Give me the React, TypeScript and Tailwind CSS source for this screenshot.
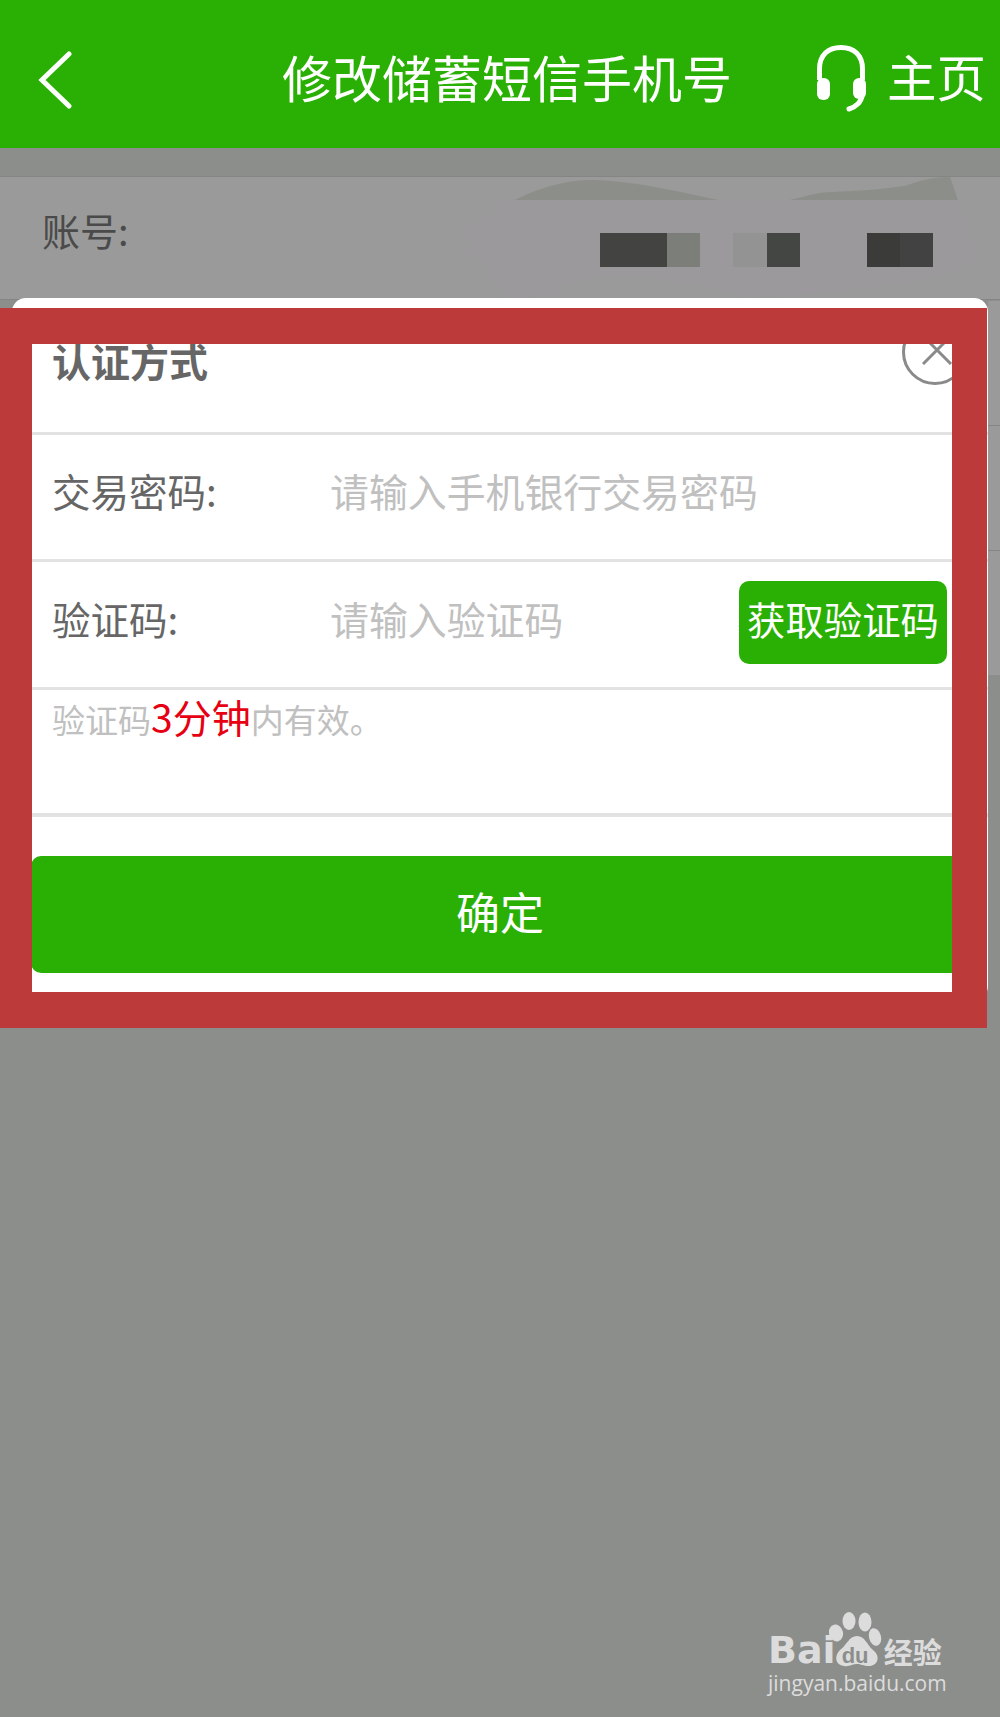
const cjk = "font-['Noto_Sans_CJK_SC','Liberation_Sans',sans-serif]";

function Headset() {
  return (
    <svg width="52" height="70" viewBox="0 0 52 70" className="mt-[10px] shrink-0" fill="none">
      <path d="M4.5 36V25C4.5 11 13 3.5 26 3.5C39 3.5 47.5 11 47.5 25V36" stroke="#fff" strokeWidth="5" />
      <rect x="2" y="34" width="13" height="22" rx="6" fill="#fff" />
      <rect x="38" y="34" width="13" height="21" rx="6" fill="#fff" />
      <path d="M47 52C46 58 41 63 34 65" stroke="#fff" strokeWidth="5" strokeLinecap="round" />
    </svg>
  );
}

function PawLogo() {
  return (
    <svg width="56" height="56" viewBox="0 0 56 56" className="shrink-0" fill="#dcdcdc">
      <ellipse cx="7" cy="21" rx="7" ry="8.5" transform="rotate(-15 7 21)" />
      <ellipse cx="20" cy="9" rx="6.5" ry="9" />
      <ellipse cx="36" cy="10" rx="6.5" ry="9.5" />
      <ellipse cx="46" cy="25" rx="6" ry="9" transform="rotate(-15 46 25)" />
      <path d="M28 24C36 24 38 33 44 38C52 44 49 54 40 54C34 54 32 52 28 52C23 52 21 55 15 54C6 53 5 44 11 38C18 33 20 24 28 24Z" />
    </svg>
  );
}

export default function App() {
  return (
    <div className={`relative h-[1717px] w-[1000px] overflow-hidden bg-[#8c8e8c] ${cjk}`}>
      <header className="relative flex h-[148px] items-center bg-[#2ab004] text-white">
        <svg width="36" height="60" viewBox="0 0 36 60" className="mt-[12px] ml-[36px]" fill="none">
          <path d="M33 4L6 30L33 56" stroke="#fff" strokeWidth="5" strokeLinecap="round" />
        </svg>
        <h1 className="absolute left-[282px] mt-[4px] text-[50px] leading-none font-normal whitespace-nowrap">修改储蓄短信手机号</h1>
        <div className="mr-[14px] ml-auto flex items-center gap-[20px]">
          <Headset />
          <span className="mt-[4px] text-[49.5px] leading-none">主页</span>
        </div>
      </header>

      <div className="h-[29px] border-b border-[#848684]" />

      <section className="relative h-[123px] border-b border-[#848684] bg-[#999a99]">
        <svg width="1000" height="123" viewBox="0 0 1000 123" className="absolute top-0 left-0">
          <path d="M515 23C545 8 570 3 594 3C640 5 680 15 718 23ZM790 23C810 18 820 15 833 15C860 14 885 12 904 9C920 4 930 0 950 0L958 23Z" fill="#8c8e89" />
          <path d="M515 23L958 23L981 83C960 93 930 100 904 106C850 115 790 120 743 120C700 110 640 95 600 100C575 105 550 115 529 121L505 121L461 53Z" fill="#9b999b" />
        </svg>
        <span className="absolute top-[28px] left-[42px] text-[38px] leading-[50px] text-[#4a4a4a]">账号:</span>
        <div className="absolute top-[56px] left-[600px] flex h-[34px]">
          <div className="w-[67px] bg-[#434442]" />
          <div className="w-[33px] bg-[#7c7e7a]" />
          <div className="ml-[33px] w-[34px] bg-[#949394]" />
          <div className="w-[33px] bg-[#444643]" />
          <div className="ml-[67px] w-[33px] bg-[#3b3c39]" />
          <div className="w-[33px] bg-[#424242]" />
        </div>
      </section>

      {/* right edge of the rows behind the dialog */}
      <div className="absolute top-[301px] left-[988px] h-[124px] w-3 bg-[#999a99]" />
      <div className="absolute top-[425px] left-[988px] h-[125px] w-3 border-t border-[#848684] bg-[#999a99]" />
      <div className="absolute top-[550px] left-[988px] h-[125px] w-3 border-t border-[#848684] bg-[#999a99]" />

      <div className="absolute top-[298px] left-[12px] flex h-[702px] w-[976px] flex-col rounded-[14px] bg-white">
        <div className="relative h-[134px] shrink-0 overflow-hidden">
          <span className="absolute top-[37px] left-[40px] text-[39px] leading-[50px] font-bold text-[#666]">认证方式</span>
          <div className="absolute top-[21px] left-[890px] h-[66px] w-[66px] rounded-full border-[3px] border-[#8a8a8a]" />
          <svg width="30" height="30" viewBox="0 0 30 30" className="absolute top-[37px] left-[910px]" fill="none">
            <path d="M1 1L29 29M29 1L1 29" stroke="#8a8a8a" strokeWidth="3" />
          </svg>
        </div>

        <div className="flex h-[127px] shrink-0 items-center border-t-[3px] border-[#e2e2e2] pb-[13px] pl-[40px]">
          <span className="w-[278px] text-[38.5px] leading-none text-[#666]">交易密码:</span>
          <span className="text-[38.9px] leading-none text-[#c0c0c0]">请输入手机银行交易密码</span>
        </div>

        <div className="relative flex h-[128px] shrink-0 items-center border-t-[3px] border-[#e2e2e2] pb-[13px] pl-[40px]">
          <span className="w-[278px] text-[38.5px] leading-none text-[#666]">验证码:</span>
          <span className="text-[38.9px] leading-none text-[#c0c0c0]">请输入验证码</span>
          <button className="absolute top-[19px] right-[41px] h-[83px] w-[208px] rounded-[10px] bg-[#2ab004] pb-[8px] text-[38.4px] whitespace-nowrap text-white">获取验证码</button>
        </div>

        <div className="h-[126px] shrink-0 border-t-[3px] border-[#e2e2e2] pt-[3px] pl-[40px] leading-[46px] text-[#c0c0c0]">
          <span className="text-[33px]">验证码</span>
          <span className="text-[39px] text-[#e60012]">3分钟</span>
          <span className="text-[33px]">内有效。</span>
        </div>

        <div className="h-[43px] shrink-0 border-t-4 border-[#e2e2e2]" />
        <button className="ml-[19px] h-[117px] w-[950px] shrink-0 rounded-[10px] bg-[#2ab004] pr-[12px] pb-[8px] text-[44px] text-white">确定</button>
      </div>

      {/* red annotation frame drawn over the screenshot */}
      <div className="absolute top-[308px] left-0 h-[720px] w-[987px] border-t-[36px] border-r-[35px] border-b-[36px] border-l-[32px] border-[#bd3a3a]" />

      <div className="absolute top-[1608px] left-[768px] flex flex-col text-[#dcdcdc]">
        <div className="flex h-[64px] items-end">
          <span className="mb-[3px] font-['DejaVu_Sans',sans-serif] text-[38px] leading-none font-bold">Bai</span>
          <div className="relative mb-[4px] -ml-[7px] h-[56px] w-[56px]">
            <PawLogo />
            <span className="absolute top-[33px] left-[13px] font-['Liberation_Sans',sans-serif] text-[22px] leading-none font-bold text-[#8c8e8c]">du</span>
          </div>
          <span className="mb-[5px] ml-[-1px] text-[29px] leading-[32px] font-bold">经验</span>
        </div>
        <span className="-mt-[2px] font-['Open_Sans',sans-serif] text-[21px] leading-[26px]">jingyan.baidu.com</span>
      </div>
    </div>
  );
}
